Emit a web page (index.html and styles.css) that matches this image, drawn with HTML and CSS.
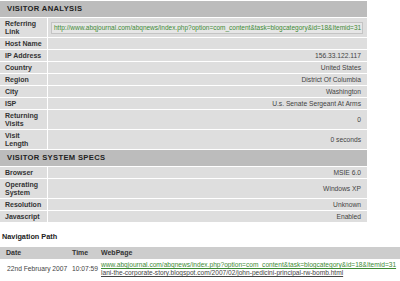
FILE: index.html
```html
<!DOCTYPE html>
<html>
<head>
<meta charset="utf-8">
<link rel="stylesheet" href="styles.css">
</head>
<body>
<table class="stats">
  <tr><th class="sec" colspan="2">VISITOR ANALYSIS</th></tr>
  <tr><td class="lbl">Referring Link</td><td class="ref"><div class="refbox"><a class="glink" href="#">http://www.abqjournal.com/abqnews/index.php?option=com_content&amp;task=blogcategory&amp;id=18&amp;Itemid=31</a></div></td></tr>
  <tr><td class="lbl">Host Name</td><td class="val"></td></tr>
  <tr><td class="lbl">IP Address</td><td class="val">156.33.122.117</td></tr>
  <tr><td class="lbl">Country</td><td class="val">United States</td></tr>
  <tr><td class="lbl">Region</td><td class="val">District Of Columbia</td></tr>
  <tr><td class="lbl">City</td><td class="val">Washington</td></tr>
  <tr><td class="lbl">ISP</td><td class="val">U.s. Senate Sergeant At Arms</td></tr>
  <tr><td class="lbl">Returning Visits</td><td class="val">0</td></tr>
  <tr><td class="lbl">Visit Length</td><td class="val">0 seconds</td></tr>
  <tr><th class="sec" colspan="2">VISITOR SYSTEM SPECS</th></tr>
  <tr><td class="lbl">Browser</td><td class="val">MSIE 6.0</td></tr>
  <tr><td class="lbl">Operating System</td><td class="val">Windows XP</td></tr>
  <tr><td class="lbl">Resolution</td><td class="val">Unknown</td></tr>
  <tr><td class="lbl">Javascript</td><td class="val">Enabled</td></tr>
</table>
<h4 class="navtitle">Navigation Path</h4>
<table class="nav">
  <tr><th class="c-date">Date</th><th class="c-time">Time</th><th>WebPage</th></tr>
  <tr>
    <td class="c-date">22nd February 2007</td>
    <td class="c-time">10:07:59</td>
    <td class="c-page"><a class="glink u" href="#">www.abqjournal.com/abqnews/index.php?option=com_content&amp;task=blogcategory&amp;id=18&amp;Itemid=31</a><br><a class="dlink" href="#">lani-the-corporate-story.blogspot.com/2007/02/john-pedicini-principal-rw-bomb.html</a></td>
  </tr>
</table>
</body>
</html>
```
FILE: styles.css
```css
html, body { margin: 0; padding: 0; background: #fff; }
body { font-family: "Liberation Sans", Arial, sans-serif; color: #333; }

.stats { width: 367px; border-collapse: separate; border-spacing: 0 1px; }
.stats td, .stats th { padding: 0; }
.sec { background: #bcbcbc; text-align: left; font-size: 7.6px; font-weight: bold; letter-spacing: 0.35px; color: #222; height: 16px; line-height: 8px; padding: 0 0 0 7px !important; }
.lbl { width: 38px; background: #dedede; font-size: 7px; font-weight: bold; color: #333; padding: 1.5px 4px 1.5px 5px !important; border-right: 1px solid #fff; line-height: 8px; vertical-align: middle; }
.val { background: #dedede; font-size: 6.7px; line-height: 8px; color: #444; text-align: right; padding: 0 6px 0 0 !important; vertical-align: middle; }
.ref { background: #dedede; padding: 2px 4px 2px 3px !important; max-width: 0; }
.refbox { border: 1px solid #c4c4c4; background: #e6e6e6; padding: 0 2px; white-space: nowrap; overflow: hidden; font-size: 6.5px; line-height: 10px; height: 10px; }
.glink { color: #3d8a35; text-decoration: none; font-size: 6.5px; }
.glink.u { text-decoration: underline; font-size: 6.6px; }
.dlink { color: #444; text-decoration: underline; font-size: 6.6px; }

.navtitle { margin: 10px 0 6px 2px; font-size: 7.3px; line-height: 8px; font-weight: bold; color: #222; }
.nav { width: 400px; border-collapse: collapse; }
.nav th { background: #cdcdcd; font-size: 7px; line-height: 8px; font-weight: bold; text-align: left; color: #333; height: 12px; padding: 0; }
.nav td { font-size: 6.7px; color: #444; padding: 2px 0 0 0; vertical-align: middle; line-height: 8px; }
.c-date { width: 65px; padding-left: 6px !important; }
.c-time { width: 29px; }
.nav td.c-date { padding-left: 7px !important; }
.c-page { white-space: nowrap; }
```
